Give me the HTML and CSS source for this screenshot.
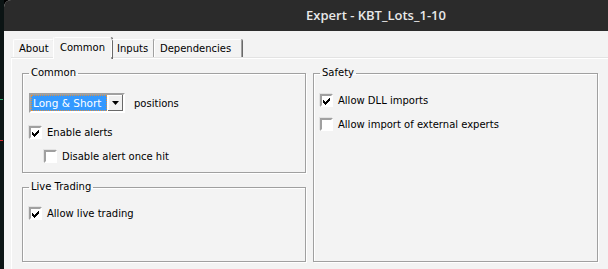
FILE: index.html
```html
<!DOCTYPE html>
<html lang="en">
<head>
  <meta charset="UTF-8">
  <title>Expert - KBT_Lots_1-10</title>
  <link rel="stylesheet" href="styles.css">
</head>
<body>
  <div class="chart-strip">
    <span class="tick green"></span>
    <span class="tick red"></span>
  </div>

  <div class="window">
    <div class="titlebar">Expert - KBT_Lots_1-10</div>

    <div class="client">
      <!-- Pestañas -->
      <div class="tabs">
        <div class="tab">About</div>
        <div class="tab active">Common</div>
        <div class="tab">Inputs</div>
        <div class="tab">Dependencies</div>
      </div>

      <div class="panel">
        <div class="columns">
          <div class="left-column">
            <fieldset class="group group-common">
              <legend>Common</legend>
              <div class="row">
                <div class="combo">
                  <span class="combo-value">Long &amp; Short</span>
                  <span class="combo-button">
                    <svg width="7" height="4" viewBox="0 0 7 4"><path d="M0 0H7L3.5 4Z" fill="#000"/></svg>
                  </span>
                </div>
                <span class="label">positions</span>
              </div>
              <label class="check">
                <span class="box checked"></span>
                <span class="label">Enable alerts</span>
              </label>
              <label class="check indent">
                <span class="box"></span>
                <span class="label">Disable alert once hit</span>
              </label>
            </fieldset>

            <fieldset class="group group-live">
              <legend>Live Trading</legend>
              <label class="check">
                <span class="box checked"></span>
                <span class="label">Allow live trading</span>
              </label>
            </fieldset>
          </div>

          <div class="right-column">
            <fieldset class="group group-safety">
              <legend>Safety</legend>
              <label class="check">
                <span class="box checked"></span>
                <span class="label">Allow DLL imports</span>
              </label>
              <label class="check">
                <span class="box"></span>
                <span class="label">Allow import of external experts</span>
              </label>
            </fieldset>
          </div>
        </div>
      </div>
    </div>
  </div>
</body>
</html>
```

FILE: styles.css
```css
body {
  margin: 0;
  width: 608px;
  height: 269px;
  overflow: hidden;
  background-color: #000;
  display: flex;
  font-family: "DejaVu Sans", sans-serif;
  font-size: 10px;
  color: #000;
}

/* Trozo del gráfico que queda detrás de la ventana */
.chart-strip {
  position: relative;
  width: 4px;
  flex-shrink: 0;
  background-color: #0b1414;
}

.tick {
  position: absolute;
  left: 0;
  width: 3px;
  height: 1px;
}

.tick.green { top: 99px; background-color: #2fa86a; }
.tick.red { top: 140px; background-color: #d8262a; }

.window {
  width: 744px;
  flex-shrink: 0;
  border-top-left-radius: 7px;
  overflow: hidden;
  background-color: #f3f3f3;
}

.titlebar {
  height: 31px;
  line-height: 31px;
  background-color: #2b2b2b;
  color: #e8e8e8;
  text-align: center;
  font-family: "Open Sans", sans-serif;
  font-weight: 600;
  font-size: 13px;
}

.client {
  padding: 6px 0 0 7px;
}

/* Pestañas */
.tabs {
  display: flex;
  align-items: flex-end;
  padding-left: 2px;
  height: 21px;
  position: relative;
  z-index: 1;
}

.tab {
  height: 17px;
  line-height: 17px;
  padding: 0 5px;
  border-top: 1px solid #fff;
  border-left: 1px solid #fff;
  border-right: 1px solid #a0a0a0;
  box-shadow: 1px 0 0 #696969;
  border-top-left-radius: 2px;
  border-top-right-radius: 2px;
  margin-bottom: 1px;
}

.tab:nth-child(1) { width: 29px; }
.tab:nth-child(3) { width: 31px; }
.tab:nth-child(4) { width: 76px; }

.tab.active {
  height: 21px;
  line-height: 19px;
  width: 45px;
  padding: 0 6px;
  margin: 0 -1px -1px -1px;
  background-color: #f3f3f3;
}

.panel {
  border-top: 1px solid #fff;
  border-left: 1px solid #fff;
  box-shadow: 0 -1px 0 #e3e3e3;
  height: 220px;
  padding: 8px 0 0 10px;
}

.columns {
  display: grid;
  grid-template-columns: 284px 285px;
  column-gap: 7px;
}

.left-column {
  display: flex;
  flex-direction: column;
  gap: 8px;
}

/* Cuadros de grupo */
.group {
  box-sizing: border-box;
  margin: 0;
  border: 1px solid #a0a0a0;
  box-shadow: inset 1px 1px 0 #fff, 1px 1px 0 #fff;
  padding: 0 0 0 6px;
}

.group legend {
  padding: 0 2px;
  margin-left: 0;
  line-height: 12px;
}

.group-common { height: 106px; padding-top: 14px; }
.group-live { height: 81px; padding-top: 14px; }
.group-safety { height: 195px; padding-top: 15px; }

.row {
  display: flex;
  align-items: center;
  gap: 9px;
  height: 20px;
  margin-bottom: 13px;
}

.combo {
  width: 92px;
  height: 16px;
  display: flex;
  border: 2px solid;
  border-color: #a0a0a0 #fff #fff #a0a0a0;
  background-color: #fff;
}

.combo-value {
  flex: 1;
  background-color: #3399ff;
  color: #fff;
  font-size: 10.5px;
  line-height: 16px;
  padding-left: 2px;
  outline: 1px dotted #e09040;
  outline-offset: -1px;
}

.combo-button {
  width: 15px;
  height: 16px;
  margin-left: 1px;
  background-color: #f0f0f0;
  box-shadow: inset -1px -1px 0 #696969, inset 1px 1px 0 #fff;
  display: flex;
  align-items: center;
  justify-content: center;
}

.check {
  display: flex;
  align-items: center;
  gap: 5px;
  height: 13px;
  margin-bottom: 11px;
}

.check.indent { margin-left: 15px; }

.box {
  width: 9px;
  height: 9px;
  border: 2px solid;
  border-color: #a0a0a0 #fff #fff #a0a0a0;
  box-shadow: -1px -1px 0 #e3e3e3;
  background-color: #fff;
}

.box.checked::after {
  content: "";
  display: block;
  width: 9px;
  height: 9px;
  background:
    linear-gradient(#000, #000) 1px 4px / 1px 3px no-repeat,
    linear-gradient(#000, #000) 2px 5px / 1px 3px no-repeat,
    linear-gradient(#000, #000) 3px 6px / 1px 3px no-repeat,
    linear-gradient(#000, #000) 4px 5px / 1px 3px no-repeat,
    linear-gradient(#000, #000) 5px 4px / 1px 3px no-repeat,
    linear-gradient(#000, #000) 6px 3px / 1px 3px no-repeat,
    linear-gradient(#000, #000) 7px 2px / 1px 3px no-repeat;
}
```
